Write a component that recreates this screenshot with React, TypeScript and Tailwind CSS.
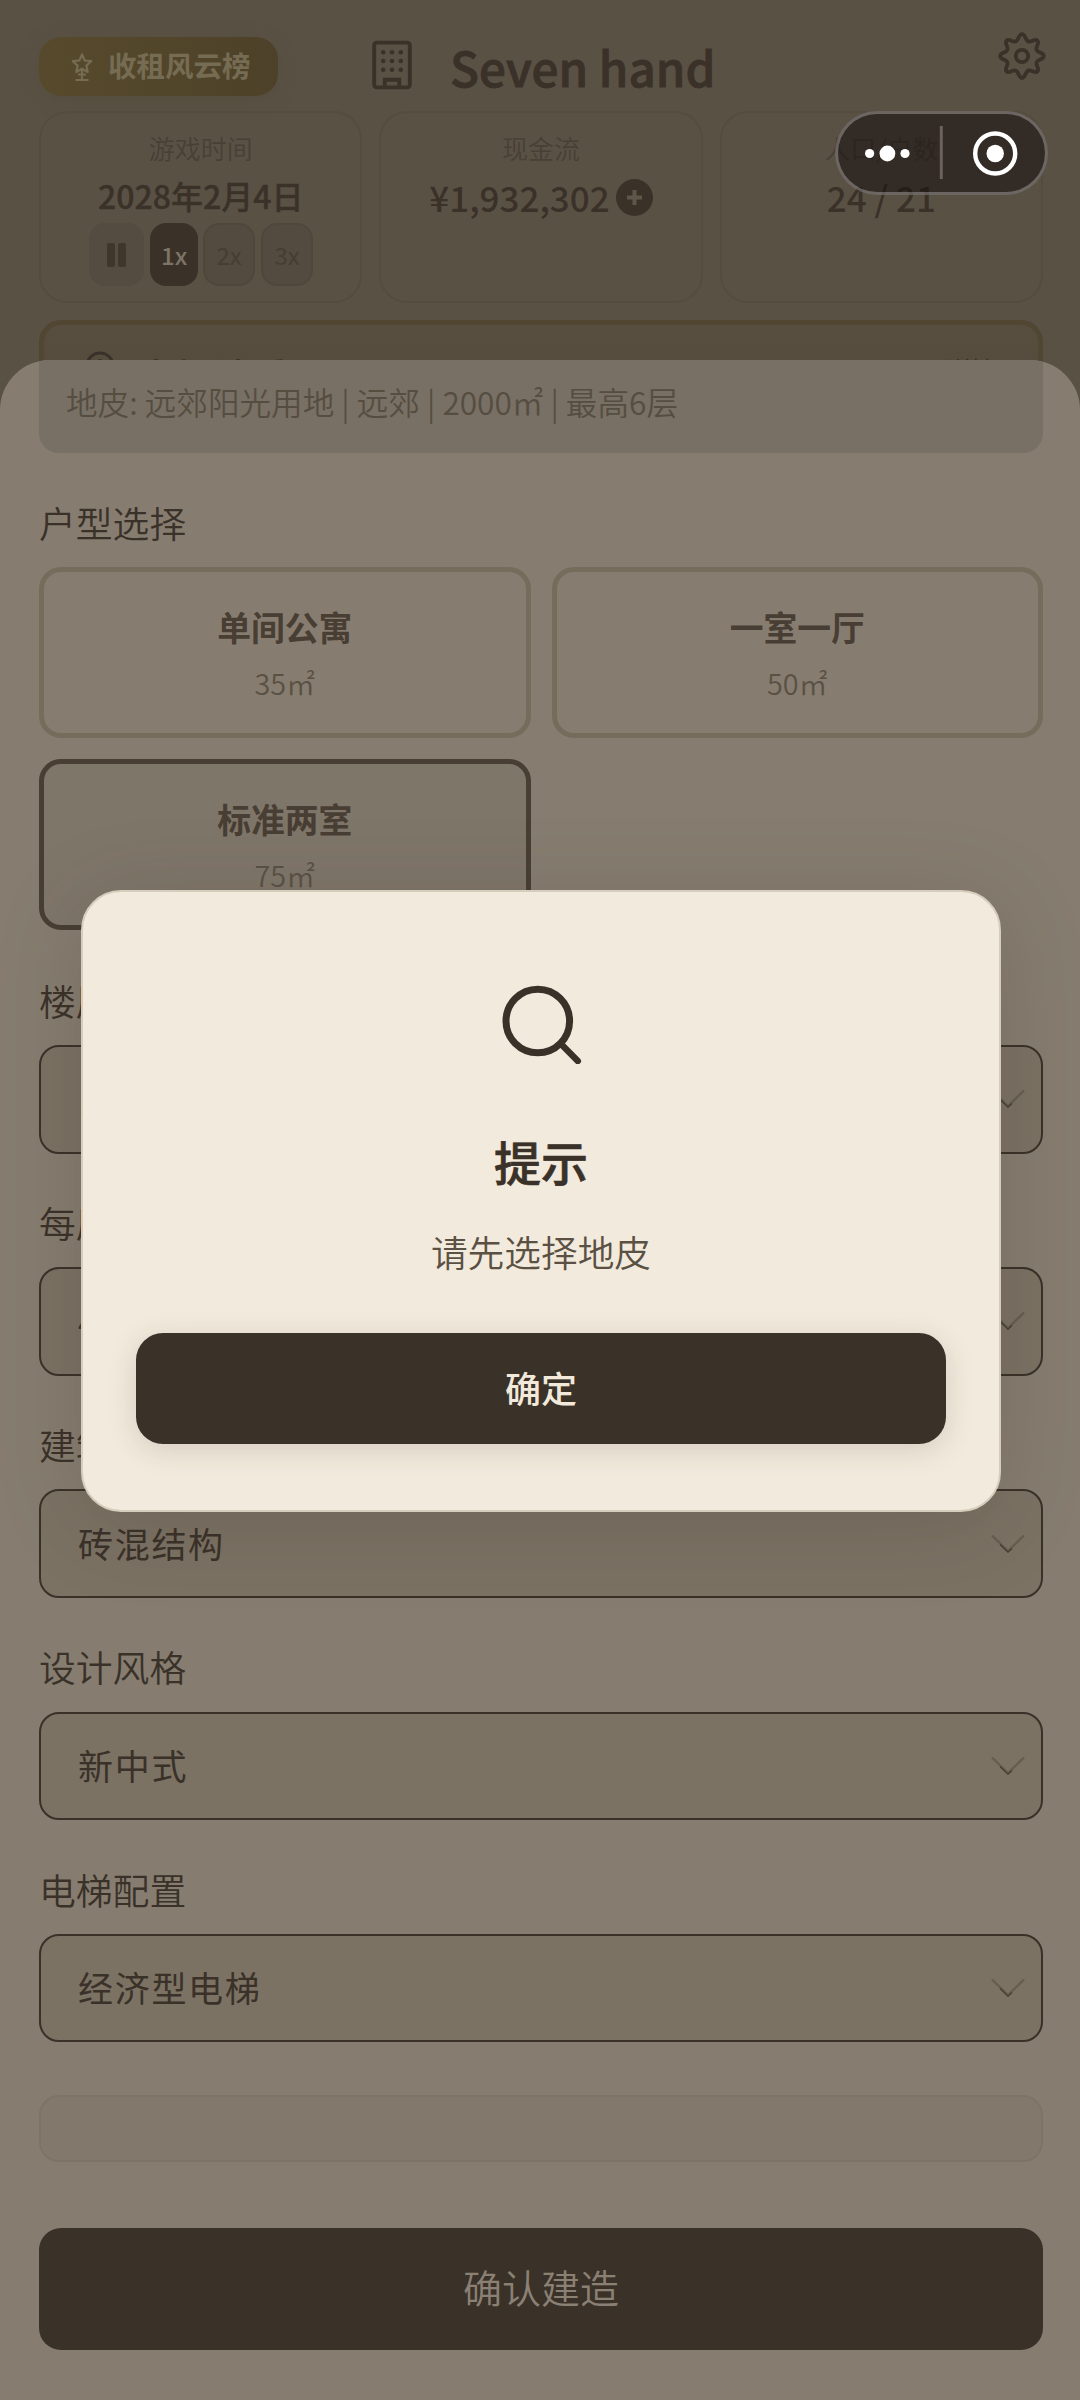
import type { ReactNode } from "react";

const unitTypes = [
  { name: "单间公寓", area: "35㎡", active: false },
  { name: "一室一厅", area: "50㎡", active: false },
  { name: "标准两室", area: "75㎡", active: true },
];

const fields = [
  { label: "楼层数", value: "1层" },
  { label: "每层户数", value: "4户" },
  { label: "建筑结构", value: "砖混结构" },
  { label: "设计风格", value: "新中式" },
  { label: "电梯配置", value: "经济型电梯" },
];

function StarTrophyIcon() {
  return (
    <svg viewBox="0 0 24 30" className="h-[30px] w-6" fill="none" stroke="currentColor" strokeWidth="2.2">
      <path d="M12 2.5l2.7 6 6.5.7-4.8 4.4 1.3 6.4-5.7-3.2-5.7 3.2 1.3-6.4L2.8 9.2l6.5-.7z" strokeLinejoin="round" />
      <path d="M12 17v10M8 22.5h8M5.5 28h13" />
    </svg>
  );
}

function BuildingIcon() {
  return (
    <svg viewBox="0 0 40 50" className="h-[50px] w-10" fill="none" stroke="currentColor" strokeWidth="3.9">
      <rect x="2.2" y="2.6" width="35.6" height="44.8" rx="2.5" />
      <path d="M12.8 47v-7.2h14.4V47" />
      <g fill="currentColor" stroke="none">
        {[12.2, 21, 29.8].map((y) =>
          [11.2, 20, 28.8].map((x) => <circle key={`${x}-${y}`} cx={x} cy={y} r="2.3" />)
        )}
      </g>
    </svg>
  );
}

function GearIcon() {
  return (
    <svg viewBox="0 0 48 48" className="size-12" fill="none" stroke="currentColor" strokeWidth="3.8" strokeLinejoin="round">
      <path d="M24 2.2C27.6 2.2 27.1 8.3 30.2 9.4C33.2 10.7 37 6 39.4 8.6C42 11 37.3 14.8 38.6 17.8C39.7 20.9 45.8 20.4 45.8 24C45.8 27.6 39.7 27.1 38.6 30.2C37.3 33.2 42 37 39.4 39.4C37 42 33.2 37.3 30.2 38.6C27.1 39.7 27.6 45.8 24 45.8C20.4 45.8 20.9 39.7 17.8 38.6C14.8 37.3 11 42 8.6 39.4C6 37 10.7 33.2 9.4 30.2C8.3 27.1 2.2 27.6 2.2 24C2.2 20.4 8.3 20.9 9.4 17.8C10.7 14.8 6 11 8.6 8.6C11 6 14.8 10.7 17.8 9.4C20.9 8.3 20.4 2.2 24 2.2Z" />
      <circle cx="24" cy="24" r="6.2" />
    </svg>
  );
}

function StatCard({ label, children }: { label: string; children: ReactNode }) {
  return (
    <div className="flex h-48 flex-1 flex-col items-center rounded-[28px] border-2 border-[#554c40] pt-[19px]">
      <div className="text-[26px] leading-[32px] text-[#484035]">{label}</div>
      {children}
    </div>
  );
}

function SpeedControls() {
  return (
    <div className="mt-[7px] flex h-[63px] pl-[1px] text-[24px] font-normal text-[#463d33]">
      <div className="mr-[6px] flex w-[55px] items-center justify-center gap-[3px] rounded-[16px] bg-[#544b41]">
        <span className="h-6 w-2 rounded-[2px] bg-[#40372c]" />
        <span className="h-6 w-2 rounded-[2px] bg-[#40372c]" />
      </div>
      <div className="mr-[5px] flex w-12 items-center justify-center rounded-[16px] bg-[#3a3129] font-medium text-[#7d7466]">1x</div>
      <div className="mr-[6px] flex w-[52px] items-center justify-center rounded-[16px] border-2 border-[#50473c] bg-[#534a40]">2x</div>
      <div className="flex w-[52px] items-center justify-center rounded-[16px] border-2 border-[#50473c] bg-[#534a40]">3x</div>
    </div>
  );
}

function SelectField({ label, value }: { label: string; value: string }) {
  return (
    <div className="h-[222.2px]">
      <div className="flex h-[43px] items-center text-[36.8px]">{label}</div>
      <div className="mt-[23px] flex h-[108.5px] items-center justify-between rounded-[20px] border-2 border-[#3a3129] bg-[#7b7264] pr-[16px] pl-[37px]">
        <span className="-mt-[1px] text-[35px] font-normal tracking-[1.7px]">{value}</span>
        <svg viewBox="0 0 34 20" className="h-5 w-[34px]" fill="none">
          <path d="M1 1.5L17 17L33 1.5" stroke="#665d51" strokeWidth="2.4" />
          <path d="M9 10.5L17 18.2L21 14.5" stroke="#463d32" strokeWidth="1.2" />
        </svg>
      </div>
    </div>
  );
}

function Capsule() {
  return (
    <div className="absolute top-[111px] left-[835px] flex h-[84px] w-[213px] items-center rounded-full border-[3px] border-white/28 bg-[#130d0d]/54">
      <svg viewBox="0 0 207 78" className="h-[78px] w-[207px]" fill="white">
        <circle cx="31.6" cy="39.5" r="4.6" />
        <circle cx="49.4" cy="39.5" r="7.9" />
        <circle cx="67" cy="39.5" r="4.6" />
        <rect x="101.8" y="12" width="3" height="53" fill="#6a625b" />
        <circle cx="157.2" cy="39.5" r="20" fill="none" stroke="white" strokeWidth="4.4" />
        <circle cx="157.2" cy="39.5" r="8.7" />
      </svg>
    </div>
  );
}

function AlertDialog() {
  return (
    <div className="absolute top-[890px] left-[81px] flex h-[622px] w-[920px] flex-col items-center rounded-[40px] border-2 border-[#d7cdbc] bg-[#f2eadc] px-[53px] shadow-[0_12px_86px_rgba(58,48,40,0.2)]">
      <svg viewBox="0 0 80 80" className="mt-[92px] ml-[1px] size-20" fill="none" stroke="#3a3129" strokeLinecap="round">
        <circle cx="35.8" cy="37" r="31.8" strokeWidth="7" />
        <path d="M60 61L75.8 77" strokeWidth="6.5" />
      </svg>
      <div className="mt-[67px] text-[47px] leading-[60px] font-medium text-[#3a3129] [-webkit-text-stroke:0.7px_#3a3129]">提示</div>
      <div className="mt-[38px] text-[36.7px] leading-[44px] font-[350] text-[#5a5043]">请先选择地皮</div>
      <button className="mt-[60px] h-[111px] w-full rounded-[27px] bg-[#3a3129] pb-[4px] text-[36px] font-medium text-[#f2e9db] shadow-[0_6px_29px_rgba(58,48,40,0.15)]">
        确定
      </button>
    </div>
  );
}

export default function App() {
  return (
    <div className="relative h-[2400px] w-[1080px] overflow-hidden bg-[#5a5145] font-['Noto_Sans_CJK_SC',sans-serif] font-[350] text-[#3a3129]">
      {/* Dimmed page header */}
      <header className="flex h-[111px] items-start pl-[39px]">
        <div className="mt-[37px] flex h-[59px] w-[239px] items-center rounded-[22px] bg-linear-to-r from-[#574a2c] to-[#4d4129] pl-[31px] text-[#756c53] shadow-[0_4px_16px_rgba(80,78,58,0.6)]">
          <StarTrophyIcon />
          <span className="-mt-[2px] ml-[14px] text-[28.5px] font-bold">收租风云榜</span>
        </div>
        <div className="mt-[40px] ml-[94px]">
          <BuildingIcon />
        </div>
        <h1 className="mt-[34px] ml-[38px] w-[549px] shrink-0 text-[47.6px] leading-[66px] font-medium [-webkit-text-stroke:0.9px_#3a3129]">
          Seven hand
        </h1>
        <div className="mt-8 -ml-[1px] shrink-0">
          <GearIcon />
        </div>
      </header>

      <section className="flex w-[1043px] gap-[17px] pl-[39px]">
        <StatCard label="游戏时间">
          <div className="mt-[10px] text-[32px] leading-[42px] font-medium [-webkit-text-stroke:0.4px_#3a3129]">2028年2月4日</div>
          <SpeedControls />
        </StatCard>
        <StatCard label="现金流">
          <div className="mt-[11px] flex items-center gap-[6px] text-[35px] leading-[44px] font-medium">
            ¥1,932,302
            <svg viewBox="0 0 37 37" className="size-[37px]">
              <circle cx="18.5" cy="18.5" r="18.5" fill="#3a3129" />
              <path d="M18.5 11v15M11 18.5h15" stroke="#5f564a" strokeWidth="4" />
            </svg>
          </div>
        </StatCard>
        <StatCard label="人口/户数">
          <div className="mt-[11px] text-[35px] leading-[44px] font-medium">24 / 21</div>
        </StatCard>
      </section>

      {/* Market event card, mostly covered by the sheet */}
      <section className="mt-[17px] ml-[39px] flex h-40 w-[1004px] items-start justify-between rounded-[22px] border-[5px] border-[#504632] bg-linear-to-b from-[#574e3f] to-[#50463c] px-[41px] pt-[26px]">
        <div className="flex gap-[23px]">
          <svg viewBox="0 0 30 30" className="size-[30px]" fill="none" stroke="currentColor" strokeWidth="3">
            <circle cx="15" cy="15" r="13" />
            <path d="M15 8v8l5 3" />
          </svg>
          <span className="mt-[2px] text-[38px] leading-[44px] font-medium">市场淡季</span>
        </div>
        <span className="mt-[3px] text-[26px] leading-[32px]">详情</span>
      </section>

      {/* Bottom sheet */}
      <main className="absolute inset-x-0 top-[360px] bottom-0 overflow-hidden rounded-t-[50px] bg-[#867d70] pr-[37px] pl-[39px]">
        <div className="h-[93px] rounded-b-[20px] bg-[#787064] pt-[20px] pl-[27px] text-[31.6px] leading-[42px] text-[#564d41]">
          地皮: 远郊阳光用地 | 远郊 | 2000㎡ | 最高6层
        </div>

        <div className="mt-[48px] flex h-[44px] items-center text-[36.8px]">户型选择</div>
        <div className="mt-[22px] grid grid-cols-2 gap-[21px]">
          {unitTypes.map((u) => (
            <div
              key={u.name}
              className={
                u.active
                  ? "h-[171px] rounded-[22px] border-[5px] border-[#483e33] bg-[#7f766a] text-center text-[#483e33]"
                  : "h-[171px] rounded-[22px] border-[5px] border-[#756c5b] text-center text-[#483e33]"
              }
            >
              <div className="mt-[33px] text-[33.8px] leading-[44px] font-bold">{u.name}</div>
              <div className="mt-[14px] text-[28.8px] leading-[40px] text-[#5a5145]">{u.area}</div>
            </div>
          ))}
        </div>

        <div className="mt-[49px]">
          {fields.map((f) => (
            <SelectField key={f.label} label={f.label} value={f.value} />
          ))}
        </div>

        <div className="mt-[5px] h-[67px] rounded-[20px] border-2 border-[#7d7467] bg-[#82796c]" />
        <button className="mt-[66px] h-[122px] w-full rounded-[22px] bg-[#3a3129] pb-[5px] text-[39px] text-[#8a8073]">确认建造</button>
      </main>

      <AlertDialog />
      <Capsule />
    </div>
  );
}
